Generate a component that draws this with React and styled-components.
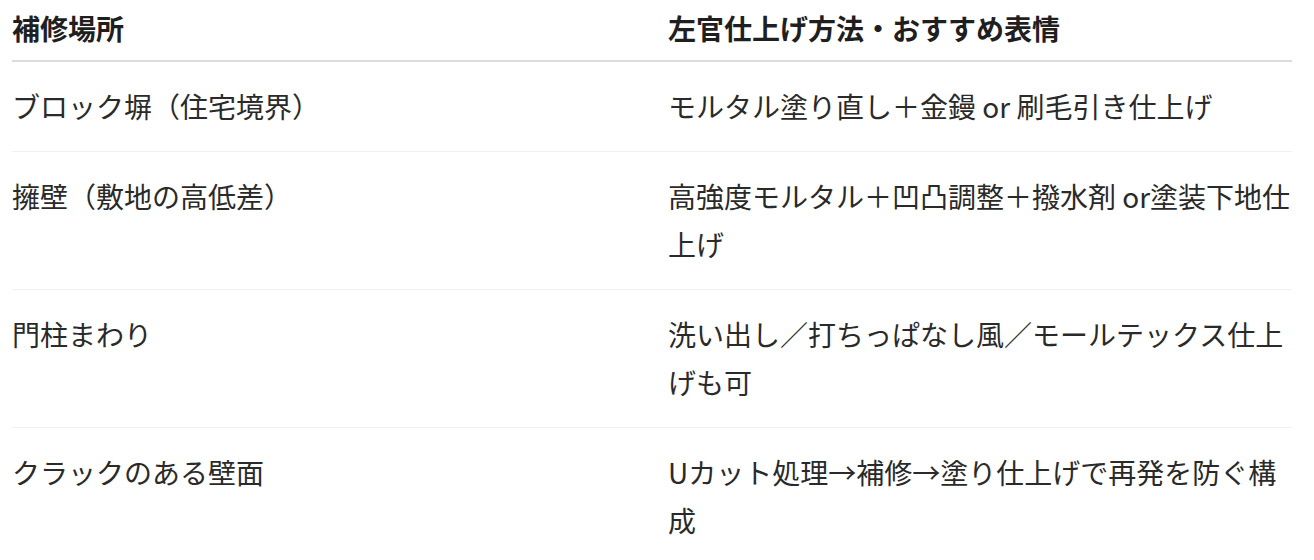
import React from 'react';
import styled, { createGlobalStyle } from 'styled-components';

const rows = [
	{ place: 'ブロック塀（住宅境界）', method: 'モルタル塗り直し＋金鏝 or 刷毛引き仕上げ' },
	{ place: '擁壁（敷地の高低差）', method: '高強度モルタル＋凹凸調整＋撥水剤 or塗装下地仕上げ' },
	{ place: '門柱まわり', method: '洗い出し／打ちっぱなし風／モールテックス仕上げも可' },
	{ place: 'クラックのある壁面', method: 'Uカット処理→補修→塗り仕上げで再発を防ぐ構成' }
];

function App() {
	return (
		<>
			<GlobalStyle />
			<Page>
				<RepairTable>
					<colgroup>
						<col style={{ width: 656 }} />
						<col style={{ width: 624 }} />
					</colgroup>
					<thead>
						<tr>
							<HeadCell>補修場所</HeadCell>
							<HeadCell>左官仕上げ方法・おすすめ表情</HeadCell>
						</tr>
					</thead>
					<tbody>
						{rows.map(row =>
							<BodyRow key={row.place}>
								<Cell>{row.place}</Cell>
								<Cell>{row.method}</Cell>
							</BodyRow>
						)}
					</tbody>
				</RepairTable>
			</Page>
		</>
	);
}

const GlobalStyle = createGlobalStyle`
	html, body {
		margin: 0;
		padding: 0;
		background: #fff;
	}
	body {
		font-family: "Noto Sans CJK JP", "Noto Sans", sans-serif;
		color: #222;
	}
`;

const Page = styled.div`
	padding: 0 12px;
`;

const RepairTable = styled.table`
	width: 1280px;
	table-layout: fixed;
	border-collapse: collapse;
	font-size: 28px;
	line-height: 48px;
`;

const HeadCell = styled.th`
	padding: 4px 0 8px;
	text-align: left;
	font-weight: 700;
	color: #1f1f1f;
	border-bottom: 2px solid #dcdcdc;
`;

const BodyRow = styled.tr`
	border-bottom: 1px solid #f0f0f0;
`;

const Cell = styled.td`
	padding: 20px 0 21px;
	vertical-align: top;
	text-align: left;
	color: #2a2a2a;
	word-break: break-all;
`;

export default App;
